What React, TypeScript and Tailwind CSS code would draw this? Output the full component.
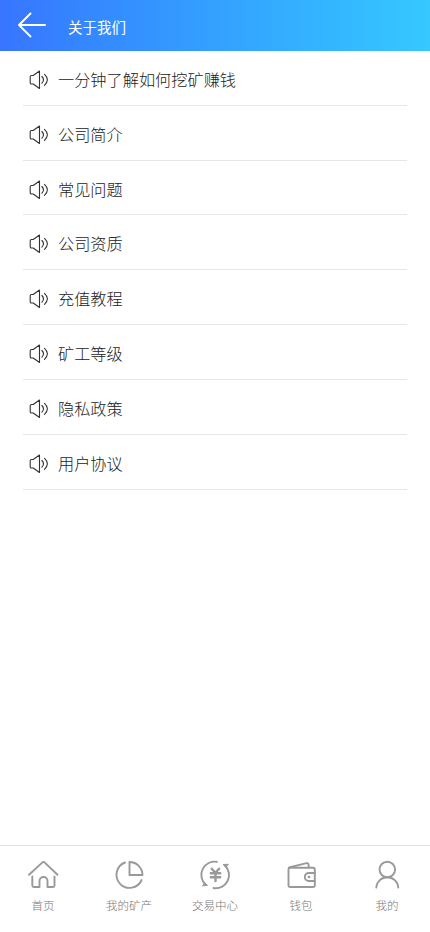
import type { ReactNode } from "react";

const articles = [
  "一分钟了解如何挖矿赚钱",
  "公司简介",
  "常见问题",
  "公司资质",
  "充值教程",
  "矿工等级",
  "隐私政策",
  "用户协议",
];

const tabs: { label: string; icon: ReactNode }[] = [
  {
    label: "首页",
    icon: (
      <>
        <path d="M2 15.8 15.2 3.6q1.3-1 2.6 0L30.5 15.8" />
        <path d="M5.3 17.5v9q0 1.5 1.5 1.5h5.7v-6a4 4 0 0 1 8 0v6H26q1.5 0 1.5-1.5v-9" />
      </>
    ),
  },
  {
    label: "我的矿产",
    icon: (
      <>
        <path d="M12 3.5A13.1 13.1 0 1 0 28.6 21" />
        <path d="M16.5 3v13h13a13 13 0 0 0-13-13Z" />
      </>
    ),
  },
  {
    label: "交易中心",
    icon: (
      <>
        <path d="M18 2.9A13.2 13.2 0 0 0 6.500 25.500" />
        <path d="M14.500 29A13.200 13.200 0 0 0 26 6.500" />
        <path d="M3.800 26.800 8.500 26.300 6 24ZM29 5.300 24 5.500 26.700 8Z" fill="currentColor" strokeWidth="1" />
        <path d="m12.700 9.700 3.700 4 3.700-4M11.800 14.300h9.400M11.800 18.300h9.400M16.500 14v8" strokeWidth="2.400" />
      </>
    ),
  },
  {
    label: "钱包",
    icon: (
      <>
        <rect x="3.5" y="8.7" width="26.3" height="19.3" rx="1.8" />
        <path d="M4 8.5 21.5 4.2q1.8-.4 2 1.2l.3 3" />
        <path d="M29.8 14h-6a4 4 0 0 0 0 8h6" />
        <circle cx="24" cy="18" r="1.3" fill="currentColor" stroke="none" />
      </>
    ),
  },
  {
    label: "我的",
    icon: (
      <>
        <circle cx="16.3" cy="10.5" r="7.8" />
        <path d="M5.3 28.5c.5-6 5.200-10.200 11-10.200s10.500 4.200 11 10.200" />
      </>
    ),
  },
];

function BackArrow() {
  return (
    <svg className="h-[26px] w-[30px]" viewBox="0 0 30 26" fill="none" stroke="currentColor" strokeWidth="1.9" strokeLinecap="round" strokeLinejoin="round">
      <path d="M13.5 1.5 2 13l11.5 11.5M2 13h26" />
    </svg>
  );
}

function Speaker() {
  return (
    <svg className="mt-1 size-5 shrink-0" viewBox="0 0 20 20" fill="none" stroke="currentColor" strokeWidth="1.1" strokeLinecap="round" strokeLinejoin="round">
      <path d="M4.2 5.5 10.500 1v17.500L4.200 14H2.500Q1.200 14 1.200 12.700V6.800q0-1.300 1.300-1.300Z" />
      <path d="M12.900 6.500q3.200 3.300 0 6.700M15.500 4.400q5.800 5.400 0 10.900" />
    </svg>
  );
}

export default function App() {
  return (
    <div className="flex h-screen flex-col bg-white font-['Noto_Sans_CJK_SC',sans-serif]">
      <header className="flex h-[51px] shrink-0 items-center bg-linear-to-r from-[#3775ff] to-[#36c8ff] pb-px pl-[17px] text-white">
        <BackArrow />
        <h1 className="ml-[21px] pt-1 text-[14.5px] leading-5">关于我们</h1>
      </header>

      <ul className="flex-1 px-[23px]">
        {articles.map((title) => (
          <li key={title} className="flex h-[54.82px] items-center border-b border-[#e6e6e6] pl-[6px] text-[#333]">
            <Speaker />
            <span className="ml-[9px] pt-[2px] text-[16.2px] leading-6 font-light text-[#222]">{title}</span>
          </li>
        ))}
      </ul>

      <nav className="grid h-[87px] shrink-0 grid-cols-5 border-t border-[#e2e2e2] text-[#999]">
        {tabs.map(({ label, icon }) => (
          <a key={label} className="flex flex-col items-center pt-[13px]">
            <svg className="size-8" viewBox="0 0 32 32" fill="none" stroke="currentColor" strokeWidth="1.9" strokeLinecap="round" strokeLinejoin="round">
              {icon}
            </svg>
            <span className="mt-[6px] text-[11.5px] leading-4 font-light text-[#777]">{label}</span>
          </a>
        ))}
      </nav>
    </div>
  );
}
